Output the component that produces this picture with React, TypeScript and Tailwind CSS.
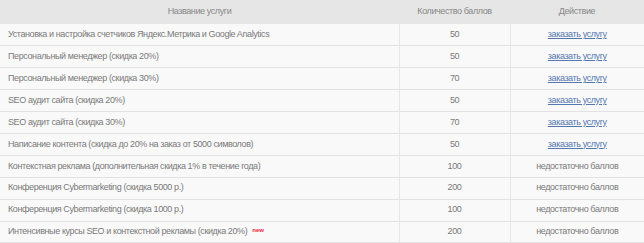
const rows: { name: string; points: number; ok: boolean; isNew?: boolean }[] = [
  { name: 'Установка и настройка счетчиков Яндекс.Метрика и Google Analytics', points: 50, ok: true },
  { name: 'Персональный менеджер (скидка 20%)', points: 50, ok: true },
  { name: 'Персональный менеджер (скидка 30%)', points: 70, ok: true },
  { name: 'SEO аудит сайта (скидка 20%)', points: 50, ok: true },
  { name: 'SEO аудит сайта (скидка 30%)', points: 70, ok: true },
  { name: 'Написание контента (скидка до 20% на заказ от 5000 символов)', points: 50, ok: true },
  { name: 'Контекстная реклама (дополнительная скидка 1% в течение года)', points: 100, ok: false },
  { name: 'Конференция Cybermarketing (скидка 5000 р.)', points: 200, ok: false },
  { name: 'Конференция Cybermarketing (скидка 1000 р.)', points: 100, ok: false },
  { name: 'Интенсивные курсы SEO и контекстной рекламы (скидка 20%)', points: 200, ok: false, isNew: true },
]

export default function App() {
  return (
    <div className="w-[644px] bg-white font-['Liberation_Sans',Arial,sans-serif] text-[9px] tracking-[-0.4px] text-[#7a7a7a]">
      <table className="w-full border-collapse">
        <thead>
          <tr className="h-[24px] bg-[#e6e6e6] text-[#888]">
            <th className="w-[399px] font-normal">Название услуги</th>
            <th className="w-[111px] font-normal">Количество баллов</th>
            <th className="font-normal">Действие</th>
          </tr>
        </thead>
        <tbody>
          {rows.map((r, i) => (
            <tr key={i} className="h-[21.9px] border-b border-[#e2e2e2] bg-[#f9f9f9]">
              <td className="pl-2 text-left">
                {r.name}
                {r.isNew && (
                  <span className="relative -top-[2px] ml-[5px] text-[6px] font-bold tracking-normal text-[#e8263a]">new</span>
                )}
              </td>
              <td className="border-x border-[#e6e6e6] text-center">{r.points}</td>
              <td className="text-center">
                {r.ok ? (
                  <a href="#" className="text-[#5577b0] underline">заказать услугу</a>
                ) : (
                  'недостаточно баллов'
                )}
              </td>
            </tr>
          ))}
        </tbody>
      </table>
    </div>
  )
}
